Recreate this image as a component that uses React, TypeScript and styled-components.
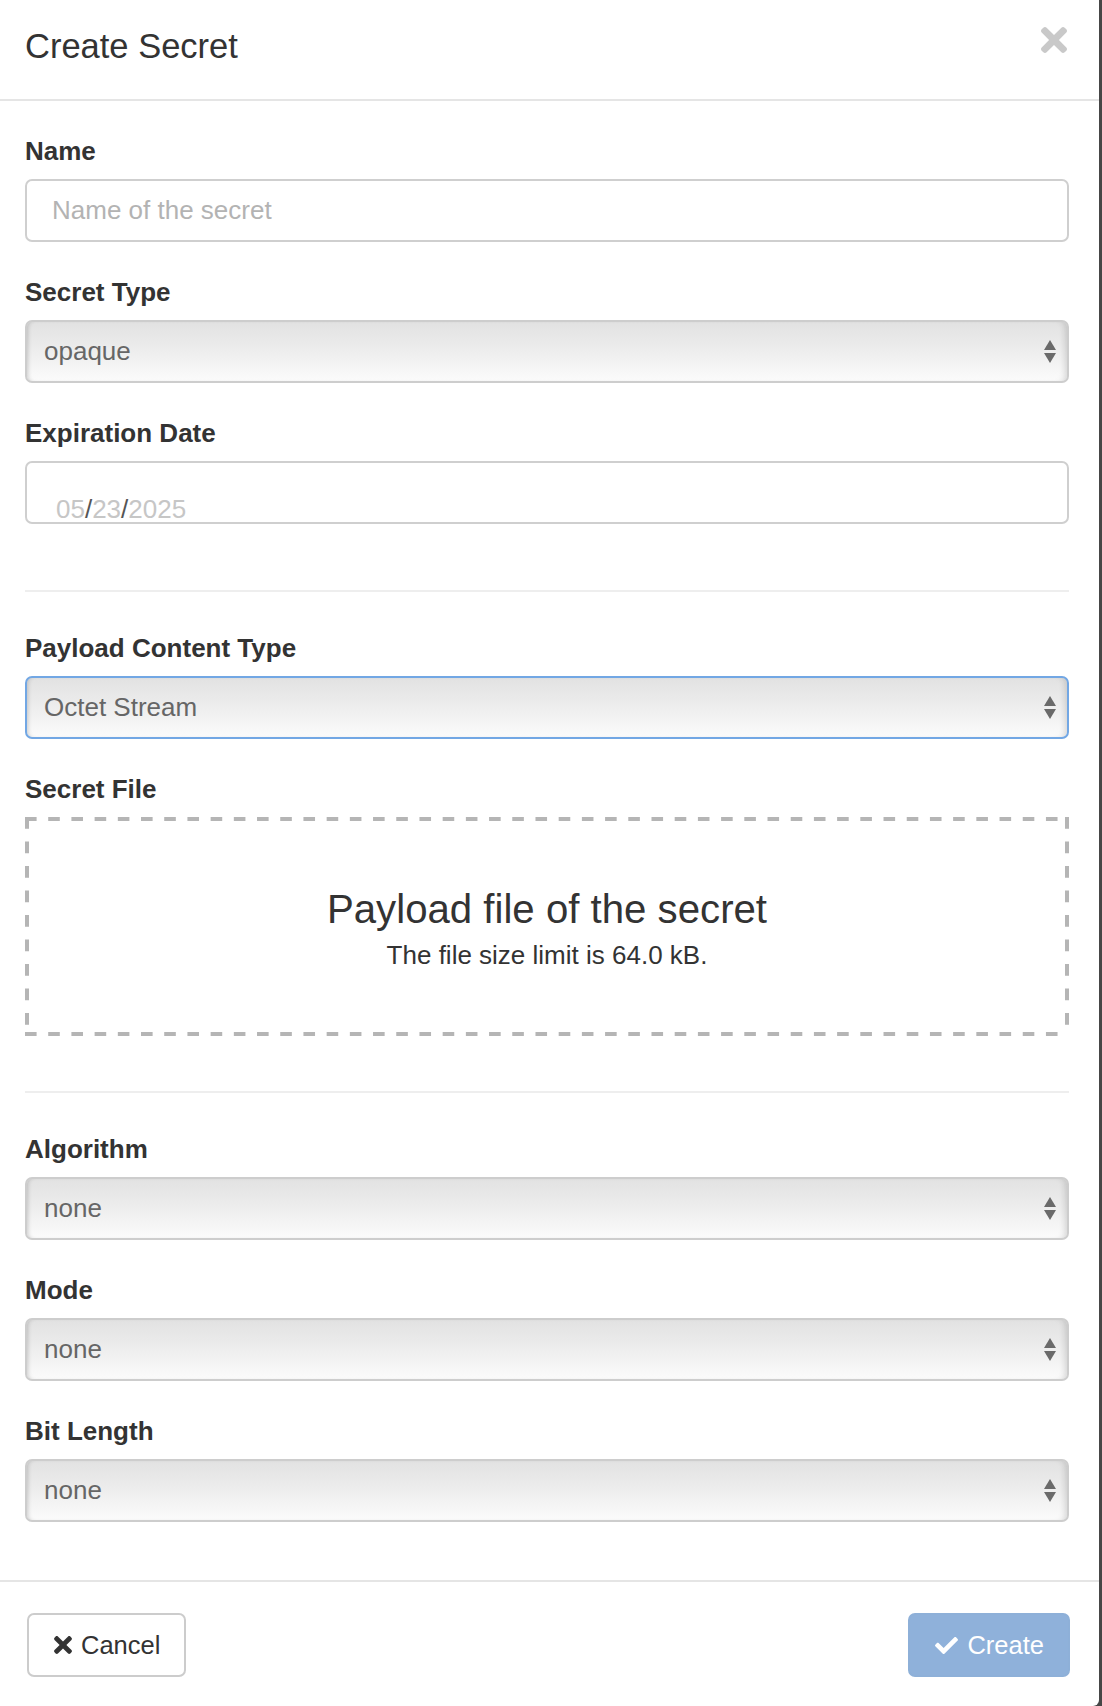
import React from "react";
import styled, { createGlobalStyle } from "styled-components";
import { FaTimes, FaCheck } from "react-icons/fa";

const GlobalStyle = createGlobalStyle`
  html, body {
    margin: 0;
    padding: 0;
    background: #464646;
  }
  body {
    font-family: "Liberation Sans", Arial, Helvetica, sans-serif;
    color: #333;
  }
  * { box-sizing: border-box; }
`;

const Panel = styled.div`
  width: 1099px;
  min-height: 1706px;
  background: #fff;
  border-bottom-right-radius: 6px;
  display: flex;
  flex-direction: column;
`;

const Header = styled.div`
  display: flex;
  justify-content: space-between;
  align-items: flex-start;
  padding: 23px 32px 30px 25px;
  border-bottom: 2px solid #e5e5e5;
`;

const Title = styled.h4`
  margin: 0;
  font-size: 34.5px;
  line-height: 46px;
  font-weight: normal;
  color: #333;
`;

const CloseButton = styled.button`
  margin: -2px 0 0;
  padding: 0;
  border: 0;
  background: none;
  color: #c9c9c9;
  display: flex;
  cursor: pointer;
`;

const CloseIcon = styled(FaTimes)`
  width: 26px;
  height: 38px;
`;

const Body = styled.div`
  display: flex;
  flex-direction: column;
  padding: 32px 30px 25px 25px;
  flex: 1;
`;

const FormGroup = styled.div<{ $mb?: number }>`
  display: flex;
  flex-direction: column;
  margin-bottom: ${(p) => (p.$mb ?? 32)}px;
`;

const Label = styled.label`
  display: block;
  font-size: 26px;
  line-height: 36px;
  font-weight: bold;
  color: #333;
  margin-bottom: 10px;
`;

const TextInput = styled.input`
  height: 63px;
  width: 100%;
  border: 2px solid #cfcfcf;
  border-radius: 7px;
  padding: 0 25px;
  font-family: inherit;
  font-size: 26px;
  color: #555;
  background: #fff;
  outline: none;
  &::placeholder {
    color: #b3b3b3;
  }
`;

const SelectBox = styled.div<{ $focused?: boolean }>`
  height: 63px;
  display: flex;
  align-items: center;
  justify-content: space-between;
  padding: 0 11px 0 17px;
  border: 2px solid ${(p) => (p.$focused ? "#72a7e4" : "#cdcdcd")};
  border-radius: 7px;
  background: linear-gradient(to bottom, #e2e2e2 0%, #ebebeb 40%, #fbfbfb 100%);
  box-shadow: inset 4px 0 4px -3px rgba(0, 0, 0, 0.18),
    inset -6px 0 6px -4px rgba(0, 0, 0, 0.14);
  font-size: 26px;
  color: #666;
`;

const DateField = styled.div`
  height: 63px;
  display: flex;
  align-items: flex-end;
  overflow: hidden;
  padding: 0 0 0 29px;
  border: 2px solid #cfcfcf;
  border-radius: 7px;
  font-size: 26px;
  line-height: 26px;
  background: #fff;
`;

const DatePart = styled.span<{ $sep?: boolean }>`
  color: ${(p) => (p.$sep ? "#555" : "#c6c6c6")};
`;

const Divider = styled.hr<{ $mt?: number }>`
  margin: ${(p) => p.$mt ?? 34}px 0 38px;
  border: 0;
  height: 2px;
  background: #eeeeee;
  width: 100%;
`;

const dashColor = "#b5b5b5";

const DropZone = styled.div`
  height: 219px;
  padding-top: 5px;
  background:
    linear-gradient(to right, ${dashColor} 12px, transparent 12px) left top / 23px 4px space no-repeat,
    linear-gradient(to right, ${dashColor} 12px, transparent 12px) left bottom / 23px 4px space no-repeat,
    linear-gradient(to bottom, ${dashColor} 12px, transparent 12px) left top / 4px 23px no-repeat space,
    linear-gradient(to bottom, ${dashColor} 12px, transparent 12px) right top / 4px 23px no-repeat space;
  display: flex;
  flex-direction: column;
  align-items: center;
  justify-content: center;
  text-align: center;
  color: #333;
`;

const DropTitle = styled.div`
  font-size: 40.2px;
  line-height: 46px;
`;

const DropNote = styled.div`
  font-size: 26px;
  line-height: 32px;
  margin-top: 6px;
`;

const Footer = styled.div`
  display: flex;
  justify-content: space-between;
  align-items: center;
  padding: 31px 29px 29px 27px;
  border-top: 2px solid #e5e5e5;
`;

const Button = styled.button<{ $primary?: boolean }>`
  height: 64px;
  display: flex;
  align-items: center;
  gap: 9px;
  padding: 0 24px 0 25px;
  border-radius: 7px;
  font-family: inherit;
  font-size: 25.5px;
  border: 2px solid ${(p) => (p.$primary ? "#8eb0d8" : "#cccccc")};
  background: ${(p) => (p.$primary ? "#8fb1da" : "#fff")};
  color: ${(p) => (p.$primary ? "#fff" : "#333")};
  cursor: pointer;
`;

const CancelIcon = styled(FaTimes)`
  width: 18px;
  height: 26px;
`;

const CheckIcon = styled(FaCheck)`
  width: 23px;
  height: 23px;
`;

const Arrows = () => (
  <svg width="12" height="23" viewBox="0 0 12 23" aria-hidden="true">
    <polygon points="6,0 12,10 0,10" fill="#6a6a6a" />
    <polygon points="0,13 12,13 6,23" fill="#6a6a6a" />
  </svg>
);

const Select = ({ value, focused }: { value: string; focused?: boolean }) => (
  <SelectBox $focused={focused}>
    <span>{value}</span>
    <Arrows />
  </SelectBox>
);

export default function App() {
  return (
    <>
      <GlobalStyle />
      <Panel>
        <Header>
          <Title>Create Secret</Title>
          <CloseButton aria-label="Close">
            <CloseIcon />
          </CloseButton>
        </Header>
        <Body>
          <FormGroup>
            <Label>Name</Label>
            <TextInput placeholder="Name of the secret" />
          </FormGroup>
          <FormGroup>
            <Label>Secret Type</Label>
            <Select value="opaque" />
          </FormGroup>
          <FormGroup>
            <Label>Expiration Date</Label>
            <DateField>
              <DatePart>05</DatePart>
              <DatePart $sep>/</DatePart>
              <DatePart>23</DatePart>
              <DatePart $sep>/</DatePart>
              <DatePart>2025</DatePart>
            </DateField>
          </FormGroup>
          <Divider />
          <FormGroup>
            <Label>Payload Content Type</Label>
            <Select value="Octet Stream" focused />
          </FormGroup>
          <FormGroup $mb={21}>
            <Label>Secret File</Label>
            <DropZone>
              <DropTitle>Payload file of the secret</DropTitle>
              <DropNote>The file size limit is 64.0 kB.</DropNote>
            </DropZone>
          </FormGroup>
          <Divider />
          <FormGroup>
            <Label>Algorithm</Label>
            <Select value="none" />
          </FormGroup>
          <FormGroup>
            <Label>Mode</Label>
            <Select value="none" />
          </FormGroup>
          <FormGroup>
            <Label>Bit Length</Label>
            <Select value="none" />
          </FormGroup>
        </Body>
        <Footer>
          <Button>
            <CancelIcon />
            Cancel
          </Button>
          <Button $primary>
            <CheckIcon />
            Create
          </Button>
        </Footer>
      </Panel>
    </>
  );
}
